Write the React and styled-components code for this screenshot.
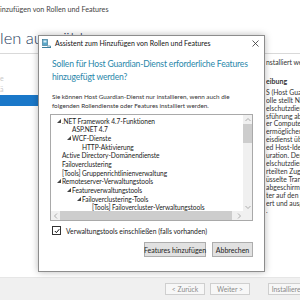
import styled, { createGlobalStyle } from "styled-components";

const GlobalStyle = createGlobalStyle`
  body {
    margin: 0;
    font-family: "Lato", "Open Sans", sans-serif;
    color: #222;
  }
`;

const Desktop = styled.div`
  position: relative;
  width: 300px;
  height: 300px;
  overflow: hidden;
  background: #fbfbfb;
`;

const MainWindow = styled.div`
  display: flex;
  flex-direction: column;
  width: 300px;
  height: 300px;
`;

const MainTitle = styled.div`
  height: 18px;
  display: flex;
  align-items: center;
  font-size: 7.2px;
  color: #444;
  background: #fff;
  white-space: nowrap;
`;

const PageHeader = styled.div`
  height: 35px;
  display: flex;
  align-items: flex-end;
  background: #fff;
  border-bottom: 1px solid #d9d9d9;
`;

const PageTitle = styled.h1`
  margin: 0 0 5px;
  font-size: 16.5px;
  font-weight: 300;
  color: #1f3a5c;
  white-space: nowrap;
  line-height: 20px;
`;

const MainBody = styled.div`
  flex: 1;
  display: flex;
  background: #fff;
`;

const Nav = styled.div`
  width: 38px;
  display: flex;
  flex-direction: column;
  padding-top: 19px;
`;

const NavItem = styled.div`
  height: 11px;
  font-size: 7px;
  line-height: 11px;
  white-space: nowrap;
  overflow: hidden;
  color: ${(p) => (p.$active ? "#fff" : "#c9c9c9")};
  background: ${(p) => (p.$active ? "#1a78c9" : "transparent")};
`;

const Content = styled.div`
  flex: 1;
`;

const Description = styled.div`
  width: 34px;
  padding-top: 5px;
  font-size: 6.8px;
  line-height: 7.9px;
  color: #333;
  white-space: nowrap;
  overflow: hidden;
`;

const DescHeading = styled.div`
  margin: 11px 0 3px;
  font-weight: 700;
  font-size: 7px;
`;

const Footer = styled.div`
  height: 22px;
  display: flex;
  align-items: center;
  gap: 5px;
  padding-left: 165px;
  background: #f0f0f0;
  border-top: 1px solid #e6e6e6;
`;

const FooterButton = styled.div`
  width: ${(p) => p.$w}px;
  height: 12px;
  box-sizing: border-box;
  border: 1px solid #cfcfcf;
  background: #f7f7f7;
  color: #8a8a8a;
  font-size: 6.8px;
  display: flex;
  align-items: center;
  justify-content: center;
  flex-shrink: 0;
  white-space: nowrap;
  margin-left: ${(p) => p.$gap || 0}px;
`;

const Dialog = styled.div`
  position: absolute;
  left: 38px;
  top: 35px;
  width: 227px;
  height: 237px;
  box-sizing: border-box;
  background: #fff;
  border: 1px solid #8c8c8c;
  box-shadow: 0 0 7px rgba(0, 0, 0, 0.28);
  display: flex;
  flex-direction: column;
`;

const DialogTitle = styled.div`
  height: 14px;
  display: flex;
  align-items: center;
  gap: 4px;
  padding: 0 5px 0 3px;
  font-size: 7px;
  color: #111;
  white-space: nowrap;
`;

const TitleText = styled.span`
  flex: 1;
`;

const DialogBody = styled.div`
  flex: 1;
  display: flex;
  flex-direction: column;
  padding: 8px 9px 0 13px;
`;

const Question = styled.h2`
  margin: 0;
  font-size: 8.6px;
  letter-spacing: -0.18px;
  font-weight: 400;
  line-height: 12.5px;
  color: #2987aa;
`;

const Intro = styled.p`
  margin: 10px 0 0;
  font-size: 6.3px;
  line-height: 8.6px;
  color: #333;
`;

const TreeBox = styled.div`
  margin: 4px 2px 0 -2px;
  height: 107px;
  box-sizing: border-box;
  border: 1px solid #a9a9a9;
  display: grid;
  grid-template-columns: 1fr 9px;
  grid-template-rows: 1fr 9px;
  overflow: hidden;
`;

const TreeList = styled.div`
  padding-top: 1px;
  overflow: hidden;
`;

const TreeRow = styled.div`
  height: 8.7px;
  display: flex;
  align-items: center;
  padding-left: ${(p) => 6 + p.$level * 10}px;
  font-size: 6.6px;
  letter-spacing: -0.05px;
  color: #222;
  white-space: nowrap;
`;

const Expander = styled.span`
  width: 5px;
  display: inline-flex;
  justify-content: flex-start;
  flex-shrink: 0;
`;

const VScroll = styled.div`
  background: #f0f0f0;
  display: flex;
  flex-direction: column;
  align-items: center;
`;

const HScroll = styled.div`
  background: #f0f0f0;
  display: flex;
  align-items: center;
`;

const Thumb = styled.div`
  background: #cdcdcd;
  flex-shrink: 0;
  width: ${(p) => p.$w};
  height: ${(p) => p.$h};
`;

const Spacer = styled.div`
  flex: 1;
`;

const Arrow = styled.div`
  width: 9px;
  height: 9px;
  display: flex;
  align-items: center;
  justify-content: center;
  flex-shrink: 0;
`;

const Corner = styled.div`
  background: #f0f0f0;
`;

const CheckRow = styled.label`
  margin-top: 5px;
  display: flex;
  align-items: center;
  gap: 5px;
  font-size: 6.8px;
  color: #222;
`;

const Box = styled.span`
  width: 7px;
  height: 7px;
  border: 1px solid #333;
  display: inline-flex;
  align-items: center;
  justify-content: center;
  background: #fff;
`;

const ButtonRow = styled.div`
  margin: 7px 2px 0 0;
  display: flex;
  justify-content: flex-end;
  gap: 6px;
`;

const Button = styled.div`
  width: ${(p) => p.$w}px;
  height: 15px;
  box-sizing: border-box;
  border: 1px solid #adadad;
  background: #e1e1e1;
  font-size: 7px;
  color: #222;
  white-space: nowrap;
  display: flex;
  align-items: center;
  justify-content: center;
`;

const treeItems = [
  { level: 0, open: true, text: ".NET Framework 4.7-Funktionen" },
  { level: 1, text: "ASP.NET 4.7" },
  { level: 1, open: true, text: "WCF-Dienste" },
  { level: 2, text: "HTTP-Aktivierung" },
  { level: 0, text: "Active Directory-Domänendienste" },
  { level: 0, text: "Failoverclustering" },
  { level: 0, text: "[Tools] Gruppenrichtlinienverwaltung" },
  { level: 0, open: true, text: "Remoteserver-Verwaltungstools" },
  { level: 1, open: true, text: "Featureverwaltungstools" },
  { level: 2, open: true, text: "Failoverclustering-Tools" },
  { level: 3, text: "[Tools] Failovercluster-Verwaltungstools" },
];

const descLines = [
  "S (Host Gua",
  "olle stellt Na",
  "elschutzdien",
  "sführung abg",
  "er Computer",
  "ermöglichen.",
  "eisdienst üb",
  "ed Host-Iden",
  "uration. Der",
  "elschutzdien",
  "rteilten Zugr",
  "üsselte Trans",
  "abgeschirmte",
  "ter auf den",
  "ert und ausg",
  ".",
];

const OpenArrow = () => (
  <svg width="4" height="4" viewBox="0 0 4 4">
    <path d="M4 0 L4 4 L0 4 Z" fill="#444" />
  </svg>
);

const Chevron = ({ dir }) => {
  const d = {
    up: "M1.5 5 L4 2.5 L6.5 5",
    down: "M1.5 3 L4 5.5 L6.5 3",
    left: "M5 1.5 L2.5 4 L5 6.5",
    right: "M3 1.5 L5.5 4 L3 6.5",
  }[dir];
  return (
    <svg width="8" height="8" viewBox="0 0 8 8">
      <path d={d} stroke="#9a9a9a" strokeWidth="0.8" fill="none" />
    </svg>
  );
};

const WizardIcon = () => (
  <svg width="9" height="9" viewBox="0 0 9 9">
    <rect x="0.5" y="0.5" width="5" height="6" fill="#5aa7c9" stroke="#2f6f8c" strokeWidth="0.6" />
    <rect x="1.5" y="1.5" width="3" height="2" fill="#d8eef7" />
    <path d="M0 8.5 H9" stroke="#3b7e9c" strokeWidth="1" />
    <path d="M5 7 L8.5 7 L8.5 8" stroke="#3b7e9c" strokeWidth="0.8" fill="none" />
  </svg>
);

const CloseIcon = () => (
  <svg width="7" height="7" viewBox="0 0 7 7">
    <path d="M0.5 0.5 L6.5 6.5 M6.5 0.5 L0.5 6.5" stroke="#333" strokeWidth="0.8" />
  </svg>
);

const Check = () => (
  <svg width="6" height="6" viewBox="0 0 6 6">
    <path d="M0.8 3 L2.4 4.6 L5.3 1.2" stroke="#111" strokeWidth="1" fill="none" />
  </svg>
);

const App = () => {
  return (
    <Desktop>
      <GlobalStyle />
      <MainWindow>
        <MainTitle>inzufügen von Rollen und Features</MainTitle>
        <PageHeader>
          <PageTitle>len auswählen</PageTitle>
        </PageHeader>
        <MainBody>
          <Nav>
            <NavItem>e</NavItem>
            <NavItem>ä</NavItem>
            <NavItem $active />
          </Nav>
          <Content />
          <Description>
            <div>nstalliert wer</div>
            <DescHeading>eibung</DescHeading>
            {descLines.map((line, i) => (
              <div key={i}>{line}</div>
            ))}
          </Description>
        </MainBody>
        <Footer>
          <FooterButton $w={40}>&lt; Zurück</FooterButton>
          <FooterButton $w={40}>Weiter &gt;</FooterButton>
          <FooterButton $w={40} $gap={13}>Installieren</FooterButton>
        </Footer>
      </MainWindow>

      <Dialog>
        <DialogTitle>
          <WizardIcon />
          <TitleText>Assistent zum Hinzufügen von Rollen und Features</TitleText>
          <CloseIcon />
        </DialogTitle>
        <DialogBody>
          <Question>
            Sollen für Host Guardian-Dienst erforderliche Features hinzugefügt werden?
          </Question>
          <Intro>
            Sie können Host Guardian-Dienst nur installieren, wenn auch die folgenden
            Rollendienste oder Features installiert werden.
          </Intro>
          <TreeBox>
            <TreeList>
              {treeItems.map((item, i) => (
                <TreeRow key={i} $level={item.level}>
                  <Expander>{item.open && <OpenArrow />}</Expander>
                  {item.text}
                </TreeRow>
              ))}
            </TreeList>
            <VScroll>
              <Arrow>
                <Chevron dir="up" />
              </Arrow>
              <Thumb $w="9px" $h="19px" />
              <Spacer />
              <Arrow>
                <Chevron dir="down" />
              </Arrow>
            </VScroll>
            <HScroll>
              <Arrow>
                <Chevron dir="left" />
              </Arrow>
              <Thumb $w="172px" $h="9px" />
              <Spacer />
              <Arrow>
                <Chevron dir="right" />
              </Arrow>
            </HScroll>
            <Corner />
          </TreeBox>
          <CheckRow>
            <Box>
              <Check />
            </Box>
            Verwaltungstools einschließen (falls vorhanden)
          </CheckRow>
          <ButtonRow>
            <Button $w={62}>Features hinzufügen</Button>
            <Button $w={41}>Abbrechen</Button>
          </ButtonRow>
        </DialogBody>
      </Dialog>
    </Desktop>
  );
};

export default App;
